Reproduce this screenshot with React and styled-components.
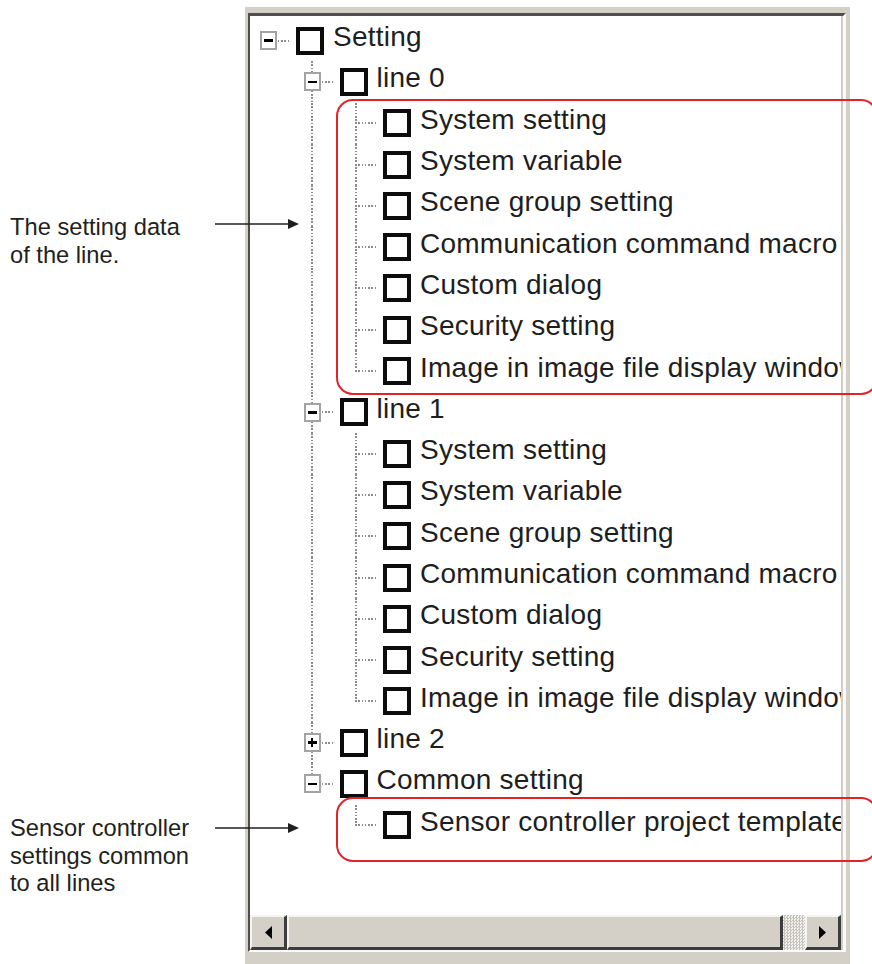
import React from 'react'
import styled, { createGlobalStyle } from 'styled-components'

const GlobalStyle = createGlobalStyle`
  html, body {
    margin: 0;
    padding: 0;
    background: #ffffff;
    overflow: hidden;
  }
`;

const DOT = '#8c8c8c';
const vDots = `repeating-linear-gradient(to bottom, ${DOT} 0 1.6px, transparent 1.6px 3.3px)`;
const hDots = `repeating-linear-gradient(to right, ${DOT} 0 1.6px, transparent 1.6px 3.3px)`;

const Page = styled.div`
  position: relative;
  display: flex;
  width: 872px;
  height: 964px;
  padding-top: 7px;
  box-sizing: border-box;
  font-family: 'Liberation Sans', Arial, sans-serif;
`;

const Notes = styled.div`
  width: 245px;
  flex-shrink: 0;
  padding: 207px 0 0 10px;
  box-sizing: border-box;
  display: flex;
  flex-direction: column;
`;

const Callout = styled.div`
  display: flex;
  align-items: flex-start;
  margin-top: ${p => p.$gap}px;
`;

const NoteText = styled.div`
  width: 205px;
  flex-shrink: 0;
  font-size: 23.7px;
  line-height: 27.5px;
  color: #231f20;
`;

const ArrowMark = styled.svg`
  flex-shrink: 0;
  position: relative;
  z-index: 2;
  margin-top: ${p => p.$top}px;
`;

const Panel = styled.div`
  width: 605px;
  height: 957px;
  flex-shrink: 0;
  background: #d4d0c8;
  padding: 6px 4px 12px 3px;
  box-sizing: border-box;
  display: flex;
  min-width: 0;
`;

const Frame = styled.div`
  flex: 1;
  min-width: 0;
  display: flex;
  flex-direction: column;
  border-style: solid;
  border-width: 3px 3px 2px 2px;
  border-color: #4e4e4e #fafafa #fafafa #4e4e4e;
`;

const Body = styled.div`
  flex: 1;
  min-width: 0;
  min-height: 0;
  display: flex;
  flex-direction: column;
  border-right: 2px solid #cfcdc8;
`;

const Tree = styled.div`
  flex: 1;
  min-width: 0;
  background: #ffffff;
  overflow: hidden;
  padding-top: 4px;
`;

const Row = styled.div`
  display: flex;
  align-items: center;
  height: 41.3px;
  padding-left: 10px;
  white-space: nowrap;
`;

const Rail = styled.div`
  width: 43.5px;
  flex-shrink: 0;
  align-self: stretch;
  background-image: ${p => (p.$on ? vDots : 'none')};
  background-size: 2px 100%;
  background-position: 7.5px 0;
  background-repeat: no-repeat;
`;

const Branch = styled.div`
  width: 36px;
  flex-shrink: 0;
  align-self: stretch;
  display: flex;
  align-items: center;
  background-image: ${hDots}, ${vDots};
  background-size: 22px 2px, 2px ${p => (p.$vert === 'full' ? '100%' : p.$vert === 'half' ? '50%' : '0')};
  background-position: 8px 50%, 7.5px 0;
  background-repeat: no-repeat;
`;

const Expander = styled.span`
  position: relative;
  width: 17px;
  height: 19px;
  box-sizing: border-box;
  border: 2px solid #a3a3a3;
  background: #ffffff;
  display: flex;
  align-items: center;
  justify-content: center;

  &::before {
    content: '';
    width: 9px;
    height: 2.5px;
    background: #000;
  }

  &::after {
    content: '';
    display: ${p => (p.$open ? 'none' : 'block')};
    position: absolute;
    width: 2.5px;
    height: 9px;
    background: #000;
  }
`;

const Check = styled.span`
  width: 28px;
  height: 28px;
  box-sizing: border-box;
  border: 4px solid #0c0c0c;
  background: #ffffff;
  flex-shrink: 0;
  margin-right: 9px;
`;

const Label = styled.span`
  font-size: 28px;
  letter-spacing: 0.25px;
  color: #1e1e1e;
  margin-bottom: 7px;
`;

const ScrollBar = styled.div`
  display: flex;
  height: 35px;
  flex-shrink: 0;
  background: #d4d0c8;
`;

const ScrollButton = styled.div`
  width: ${p => p.$w}px;
  flex-shrink: 0;
  box-sizing: border-box;
  border-style: solid;
  border-width: 2px 3px 3px 2px;
  border-color: #f6f5f2 #3c3c3c #3c3c3c #f6f5f2;
  background: #d4d0c8;
  display: flex;
  align-items: center;
  justify-content: center;
`;

const Thumb = styled.div`
  flex: 1;
  box-sizing: border-box;
  border-style: solid;
  border-width: 2px 3px 3px 2px;
  border-color: #f6f5f2 #3c3c3c #3c3c3c #f6f5f2;
  background: #d4d0c8;
`;

const Track = styled.div`
  width: 22px;
  flex-shrink: 0;
  background-color: #e4e2dd;
  background-image: repeating-conic-gradient(#c6c3bc 0 25%, #f2f1ee 0 50%);
  background-size: 3px 3px;
`;

const Highlight = styled.div`
  position: absolute;
  left: 336px;
  top: ${p => p.$top}px;
  width: 542px;
  height: ${p => p.$h}px;
  box-sizing: border-box;
  border: 2px solid #e3232c;
  border-radius: 17px;
  pointer-events: none;
`;

const lineItems = [
  'System setting',
  'System variable',
  'Scene group setting',
  'Communication command macro',
  'Custom dialog',
  'Security setting',
  'Image in image file display window',
];

const data = {
  label: 'Setting',
  open: true,
  children: [
    { label: 'line 0', open: true, children: lineItems.map(label => ({ label })) },
    { label: 'line 1', open: true, children: lineItems.map(label => ({ label })) },
    { label: 'line 2', open: false, children: [] },
    { label: 'Common setting', open: true, children: [{ label: 'Sensor controller project template' }] },
  ],
};

function flatten(node, level, rails, isLast, out) {
  const hasKids = !!node.children;
  out.push({
    label: node.label,
    level,
    rails,
    vert: level === 0 ? 'none' : isLast ? 'half' : 'full',
    expander: hasKids ? (node.open ? 'minus' : 'plus') : null,
  });
  if (hasKids && node.open) {
    node.children.forEach((c, i) =>
      flatten(c, level + 1, [...rails, !isLast], i === node.children.length - 1, out)
    );
  }
  return out;
}

const rows = flatten(data, 0, [], true, []);

function Arrow({ top }) {
  return (
    <ArrowMark width="84" height="20" viewBox="0 0 84 20" $top={top}>
      <line x1="0" y1="10" x2="76" y2="10" stroke="#231f20" strokeWidth="1.6" />
      <polygon points="73,5 84,10 73,15" fill="#231f20" />
    </ArrowMark>
  );
}

function TreeRow({ row }) {
  return (
    <Row>
      {row.rails.map((on, i) => <Rail key={i} $on={on} />)}
      <Branch $vert={row.vert}>
        {row.expander && <Expander $open={row.expander === 'minus'} />}
      </Branch>
      <Check />
      <Label>{row.label}</Label>
    </Row>
  );
}

function App() {
  return (
    <>
      <GlobalStyle />
      <Page>
        <Notes>
          <Callout $gap={0}>
            <NoteText>The setting data<br />of the line.</NoteText>
            <Arrow top={0} />
          </Callout>
          <Callout $gap={546}>
            <NoteText>Sensor controller<br />settings common<br />to all lines</NoteText>
            <Arrow top={3} />
          </Callout>
        </Notes>
        <Panel>
          <Frame>
            <Body>
              <Tree>
                {rows.map((r, i) => <TreeRow key={i} row={r} />)}
              </Tree>
              <ScrollBar>
                <ScrollButton $w={37}>
                  <svg width="8" height="13" viewBox="0 0 8 13"><polygon points="8,0 8,13 1,6.5" fill="#000" /></svg>
                </ScrollButton>
                <Thumb />
                <Track />
                <ScrollButton $w={36}>
                  <svg width="8" height="13" viewBox="0 0 8 13"><polygon points="0,0 0,13 7,6.5" fill="#000" /></svg>
                </ScrollButton>
              </ScrollBar>
            </Body>
          </Frame>
        </Panel>
        <Highlight $top={99} $h={296} />
        <Highlight $top={797} $h={65} />
      </Page>
    </>
  );
}

export default App;
